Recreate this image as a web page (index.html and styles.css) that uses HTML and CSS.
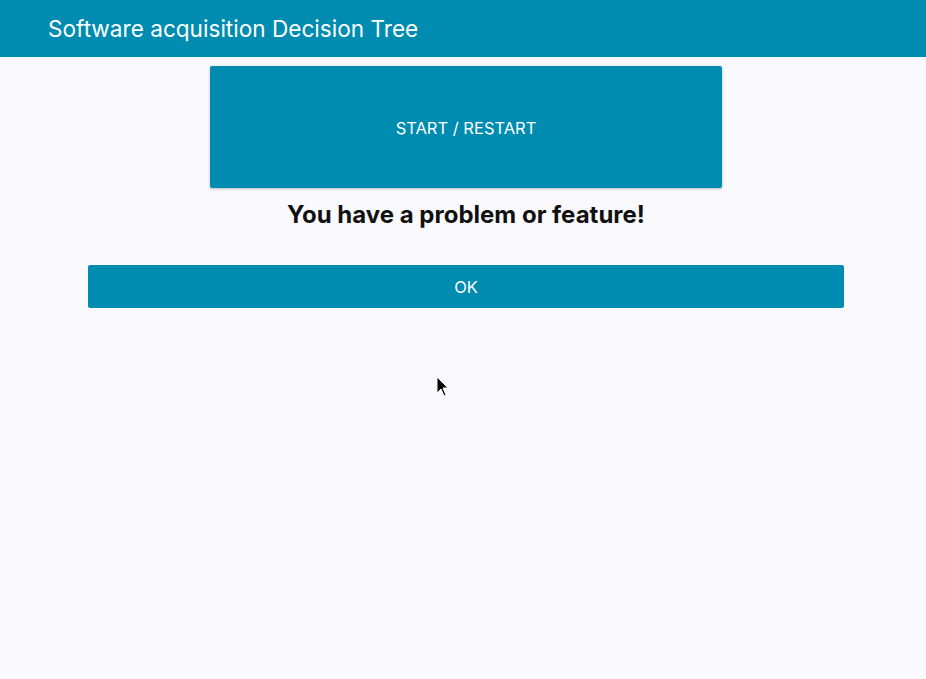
FILE: index.html
```html
<!DOCTYPE html>
<html>
<head>
<meta charset="utf-8">
<link rel="stylesheet" href="styles.css">
</head>
<body>
<header class="topbar">
  <h1 class="title">Software acquisition Decision Tree</h1>
</header>
<main class="content">
  <button class="btn btn-start">START / RESTART</button>
  <h2 class="question">You have a problem or feature!</h2>
  <button class="btn btn-ok">OK</button>
</main>
<svg class="cursor" width="14" height="22" viewBox="0 0 14 22">
  <path d="M1 1 L1 17 L5 13 L8 20 L10 19 L7 12 L12 12 Z" fill="#000" stroke="#fff" stroke-width="1"/>
</svg>
</body>
</html>
```
FILE: styles.css
```css
html, body {
  margin: 0;
  padding: 0;
  background: #fafafe;
  font-family: Inter, "Open Sans", sans-serif;
}
.topbar {
  height: 57px;
  background: #008bb0;
  display: flex;
  align-items: center;
  padding-left: 48px;
  box-sizing: border-box;
}
.title {
  margin: 0;
  color: #fff;
  font-weight: 400;
  font-size: 22.6px;
}
.content {
  display: flex;
  flex-direction: column;
  align-items: center;
  padding-left: 6px;
  padding-top: 9px;
}
.btn {
  border: none;
  background: #008bb0;
  color: #fff;
  font-family: Inter, "Open Sans", sans-serif;
  font-size: 16.5px;
  border-radius: 2px;
  cursor: pointer;
}
.btn-start {
  width: 512px;
  height: 122px;
  padding-top: 2px;
  box-shadow: 0 1px 3px rgba(0,0,0,0.25);
}
.question {
  margin: 14px 0 0;
  font-size: 24px;
  font-weight: 700;
  color: #111;
  height: 26px;
  line-height: 26px;
}
.btn-ok {
  margin-top: 37px;
  width: 756px;
  height: 43px;
}
.cursor {
  position: absolute;
  left: 436px;
  top: 376px;
}
```
